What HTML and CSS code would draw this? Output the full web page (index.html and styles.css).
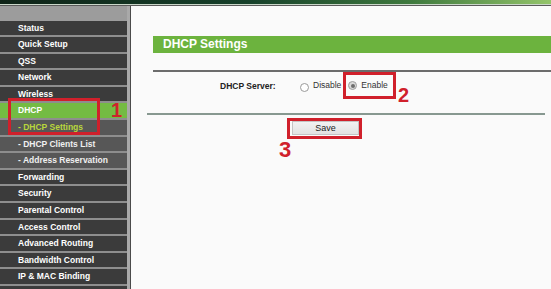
FILE: index.html
```html
<!DOCTYPE html>
<html>
<head>
<meta charset="utf-8">
<link rel="stylesheet" href="styles.css">
</head>
<body>
<div class="topbar"></div>
<div class="layout">
  <nav class="sidebar">
    <div class="side-head"></div>
    <ul class="menu">
      <li class="item">Status</li>
      <li class="item">Quick Setup</li>
      <li class="item">QSS</li>
      <li class="item">Network</li>
      <li class="item">Wireless</li>
      <li class="item active">DHCP</li>
      <li class="item sub current">- DHCP Settings</li>
      <li class="item sub">- DHCP Clients List</li>
      <li class="item sub">- Address Reservation</li>
      <li class="item">Forwarding</li>
      <li class="item">Security</li>
      <li class="item">Parental Control</li>
      <li class="item">Access Control</li>
      <li class="item">Advanced Routing</li>
      <li class="item">Bandwidth Control</li>
      <li class="item">IP &amp; MAC Binding</li>
      <li class="item"></li>
    </ul>
  </nav>
  <div class="divider"></div>
  <main class="content">
    <div class="title-bar">DHCP Settings</div>
    <div class="rule-top"></div>
    <div class="form-row">
      <span class="label">DHCP Server:</span>
      <span class="radio"></span><span class="opt">Disable</span>
      <span class="radio checked"></span><span class="opt">Enable</span>
    </div>
    <div class="rule-bottom"></div>
    <div class="actions">
      <button class="save">Save</button>
    </div>
  </main>
</div>
<div class="mark box1"></div>
<div class="num n1">1</div>
<div class="mark box2"></div>
<div class="num n2">2</div>
<div class="mark box3"></div>
<div class="num n3">3</div>
</body>
</html>
```
FILE: styles.css
```css
html, body {
  margin: 0;
  padding: 0;
  width: 551px;
  height: 289px;
  overflow: hidden;
  background: #fafafa;
  font-family: "Liberation Sans", Arial, sans-serif;
}
body { position: relative; }

.topbar {
  height: 4px;
  background: linear-gradient(to right, #0f2418 0%, #16402a 45%, #3f7a3e 75%, #93c46a 100%);
  border-bottom: 1px solid #c9d6c8;
  box-shadow: 0 1px 0 #5a5a5a;
  margin-bottom: 1px;
}

.layout {
  display: flex;
  height: 283px;
}

.sidebar {
  width: 127px;
  background: #3b3b3b;
  flex: none;
}
.side-head {
  height: 14.5px;
  background: #9c9c9c;
}
.menu {
  list-style: none;
  margin: 0;
  padding: 0;
}
.item {
  box-sizing: border-box;
  height: 16.6px;
  line-height: 14.6px;
  padding-left: 18px;
  border-bottom: 2px solid #8e8e8e;
  color: #ffffff;
  font-weight: bold;
  font-size: 8.5px;
  background: #3b3b3b;
  white-space: nowrap;
}
.item.active {
  background: #74bb43;
  color: #ffffff;
}
.item.sub {
  background: #575757;
  color: #f0f0f0;
}
.item.current {
  color: #b9d63c;
}

.divider {
  width: 3px;
  background: #a9a9a9;
  border-right: 1px solid #4a4a4a;
  flex: none;
}

.content {
  flex: 1;
  background: #fafafa;
  display: flex;
  flex-direction: column;
}

.title-bar {
  margin: 30px 0 0 22px;
  height: 17px;
  line-height: 17px;
  background: #6cb33e;
  color: #ffffff;
  font-weight: bold;
  font-size: 12px;
  padding-left: 10px;
}
.rule-top {
  margin: 17px 0 0 22px;
  height: 2px;
  background: #6c6c6c;
}
.form-row {
  height: 27px;
  display: flex;
  align-items: center;
  padding-left: 89px;
  font-size: 8.5px;
  color: #333333;
}
.label {
  font-weight: bold;
  width: 80px;
  color: #222222;
}
.radio {
  box-sizing: border-box;
  width: 9px;
  height: 9px;
  border-radius: 50%;
  border: 1px solid #9a9a9a;
  background: #ffffff;
  margin-top: 3px;
  display: flex;
  align-items: center;
  justify-content: center;
}
.radio.checked {
  margin-top: 0;
  background: #d9d9d9;
  border-color: #a0a0a0;
}
.radio.checked::after {
  content: "";
  width: 4px;
  height: 4px;
  border-radius: 50%;
  background: #6e6e6e;
}
.opt {
  margin-left: 4px;
  margin-right: 7px;
  margin-top: -2px;
}

.rule-bottom {
  margin: 14px 6px 0 16px;
  height: 2px;
  background: #879890;
}
.actions {
  margin: 6px 0 0 161px;
}
.save {
  box-sizing: border-box;
  width: 67px;
  height: 14px;
  padding: 0;
  margin: 0;
  border: 1px solid #c4c4c4;
  background: linear-gradient(#f2f2f2, #e2e2e2);
  font-family: "Liberation Sans", Arial, sans-serif;
  font-size: 9px;
  color: #222222;
  display: block;
}

.mark {
  position: absolute;
  box-sizing: border-box;
  border: 3px solid #d0202b;
}
.box1 { left: 8px; top: 98px; width: 92px; height: 37px; }
.box2 { left: 343px; top: 72px; width: 53px; height: 27px; }
.box3 { left: 287px; top: 118px; width: 75px; height: 21px; }

.num {
  position: absolute;
  color: #d0202b;
  font-weight: bold;
  font-family: "Liberation Sans", Arial, sans-serif;
  font-size: 20px;
  line-height: 20px;
}
.n1 { left: 111px; top: 100px; }
.n2 { left: 398px; top: 85px; }
.n3 { left: 279px; top: 139px; font-size: 22px; line-height: 22px; }
```
